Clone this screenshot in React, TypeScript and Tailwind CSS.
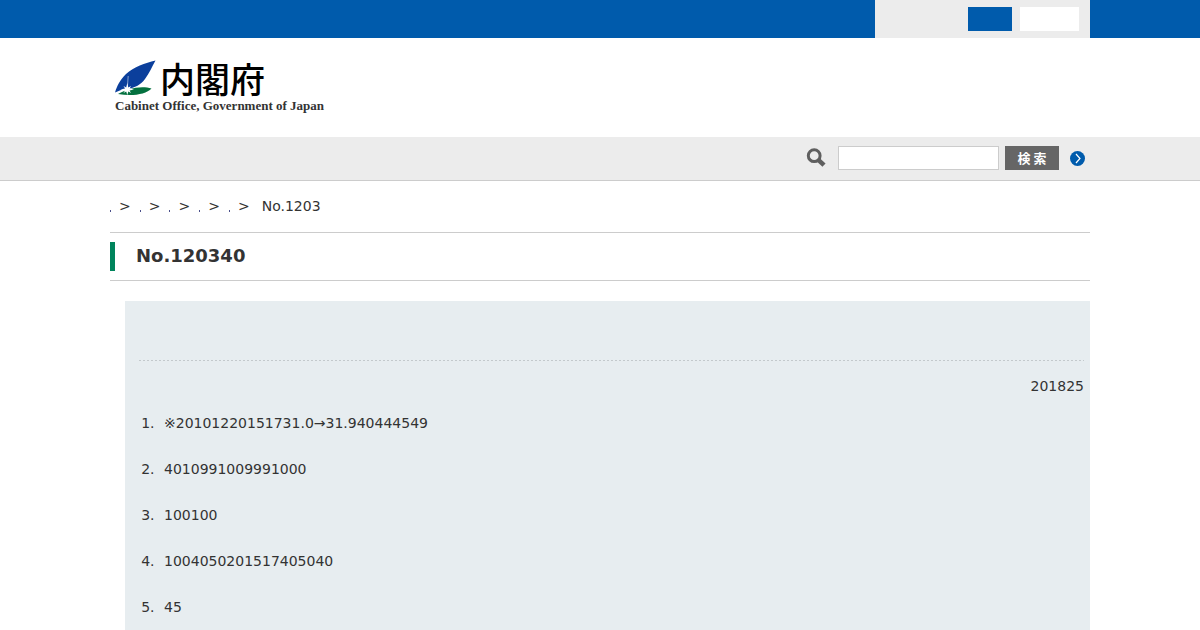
import React, { useState } from 'react';

const crumbs = ['/', '/search', '/list', '/meeting', '/index'];

const items = [
  '※20101220151731.0→31.940444549',
  '4010991009991000',
  '100100',
  '1004050201517405040',
  '45',
];

function LogoMark() {
  return (
    <svg className="h-9 w-[42px]" viewBox="0 0 42 36" aria-hidden="true">
      <path d="M41.5 0.5C31 3 20 7 12 14C6 20 3 26 1 32.5C5 30.5 9 29.3 13 29C21 28 27 24.5 31 19C35 13.5 38 7 41.5 0.5Z" fill="#0b3f9c" />
      <path d="M14.2 16L13.3 28" fill="none" stroke="#fff" strokeWidth="0.5" />
      <path d="M4 34C12 29 27 25 37.5 28.5C32 34.5 18 36.5 4 34Z" fill="#04713f" />
      <path d="M13.3 23L14.3 27.6L17 26L15.6 28.5L20 29.6L15.6 30.5L17 33L14.3 31.4L13.3 35L12.2 31.4L9.5 33L11 30.5L6.5 29.6L11 28.5L9.5 26L12.2 27.6Z" fill="#fff" />
    </svg>
  );
}

export default function App() {
  const [query, setQuery] = useState('');

  return (
    <div className="flex min-h-screen flex-col bg-white font-['DejaVu_Sans','Noto_Sans_CJK_JP',sans-serif] text-sm text-[#333]">
      <div className="bg-[#005bac]">
        <div className="mx-auto flex max-w-[980px] justify-end">
          <div className="flex h-[38px] w-[215px] items-center justify-end gap-2 bg-[#ececec] pr-[11px]">
            <a href="/size/normal" aria-label="標準" className="h-6 w-11 bg-[#005bac]"></a>
            <a href="/size/large" aria-label="拡大" className="h-6 w-[59px] bg-white"></a>
          </div>
        </div>
      </div>

      <header className="mx-auto w-full max-w-[980px] px-1 pt-[22px] pb-[21px]">
        <a href="/" className="block w-fit text-black">
          <span className="flex h-9 items-center gap-1">
            <LogoMark />
            <span className="font-['Noto_Sans_CJK_JP',sans-serif] text-[35px] leading-9 font-medium">内閣府</span>
          </span>
          <span className="block pl-px font-['Liberation_Serif',serif] text-[13px] leading-5 font-bold text-[#333]">
            Cabinet Office, Government of Japan
          </span>
        </a>
      </header>

      <div className="border-b border-[#ccc] bg-[#ececec]">
        <form
          role="search"
          onSubmit={(e) => e.preventDefault()}
          className="mx-auto flex max-w-[980px] items-center justify-end pt-[9px] pr-1 pb-2.5"
        >
          <label htmlFor="query" aria-label="検索" className="mr-3">
            <svg className="h-5 w-5" viewBox="0 0 20 20" fill="none" stroke="#5f5f5f">
              <circle cx="8.2" cy="7.7" r="5.9" strokeWidth="3" />
              <path d="M12.3 11.8L18 17.2" strokeWidth="4.5" />
            </svg>
          </label>
          <input
            id="query"
            type="text"
            value={query}
            onChange={(e) => setQuery(e.target.value)}
            className="mr-1.5 h-6 w-[161px] border border-[#ccc] bg-white px-1"
          />
          <button type="submit" className="mr-[11px] h-6 w-[54px] bg-[#666] font-['Noto_Sans_CJK_JP',sans-serif] text-[13px] leading-6 font-bold text-white">
            検 索
          </button>
          <a href="/search/help" aria-label="検索の使い方">
            <svg className="h-4 w-4" viewBox="0 0 16 16" fill="none">
              <circle cx="7.5" cy="8.5" r="7.5" fill="#005bac" />
              <path d="M6 4L10 8.5L6 13" stroke="#fff" strokeWidth="1.2" />
            </svg>
          </a>
        </form>
      </div>

      <main className="mx-auto flex w-full max-w-[980px] flex-1 flex-col">
        <nav className="flex items-center gap-px pt-[15px] pb-4 leading-5">
          {crumbs.map((href) => (
            <span key={href} className="flex items-center">
              <a href={href} aria-label={href} className="mt-2.5 mr-2 h-0.5 w-px bg-[#4a4f8a]"></a>
              <span className="pr-2">&gt;</span>
            </span>
          ))}
          <span className="pl-[3px]">No.1203</span>
        </nav>

        <div className="border-y border-[#ccc] py-[9px]">
          <h1 className="border-l-5 border-[#00845c] pb-px pl-[21px] text-lg leading-7 font-bold">No.120340</h1>
        </div>

        <section className="mt-5 ml-[15px] flex-1 bg-[#e7edf0] pt-[59px] pr-1.5 pl-3.5">
          <hr className="h-px border-0 bg-[repeating-linear-gradient(90deg,#c3c9cc_0_2px,transparent_2px_4px)]" />
          <p className="mt-[13px] text-right leading-6">201825</p>
          <ol className="mt-[13px] list-decimal space-y-[22px] pl-5">
            {items.map((item) => (
              <li key={item} className="pl-[5px] leading-6">{item}</li>
            ))}
          </ol>
        </section>
      </main>
    </div>
  );
}
